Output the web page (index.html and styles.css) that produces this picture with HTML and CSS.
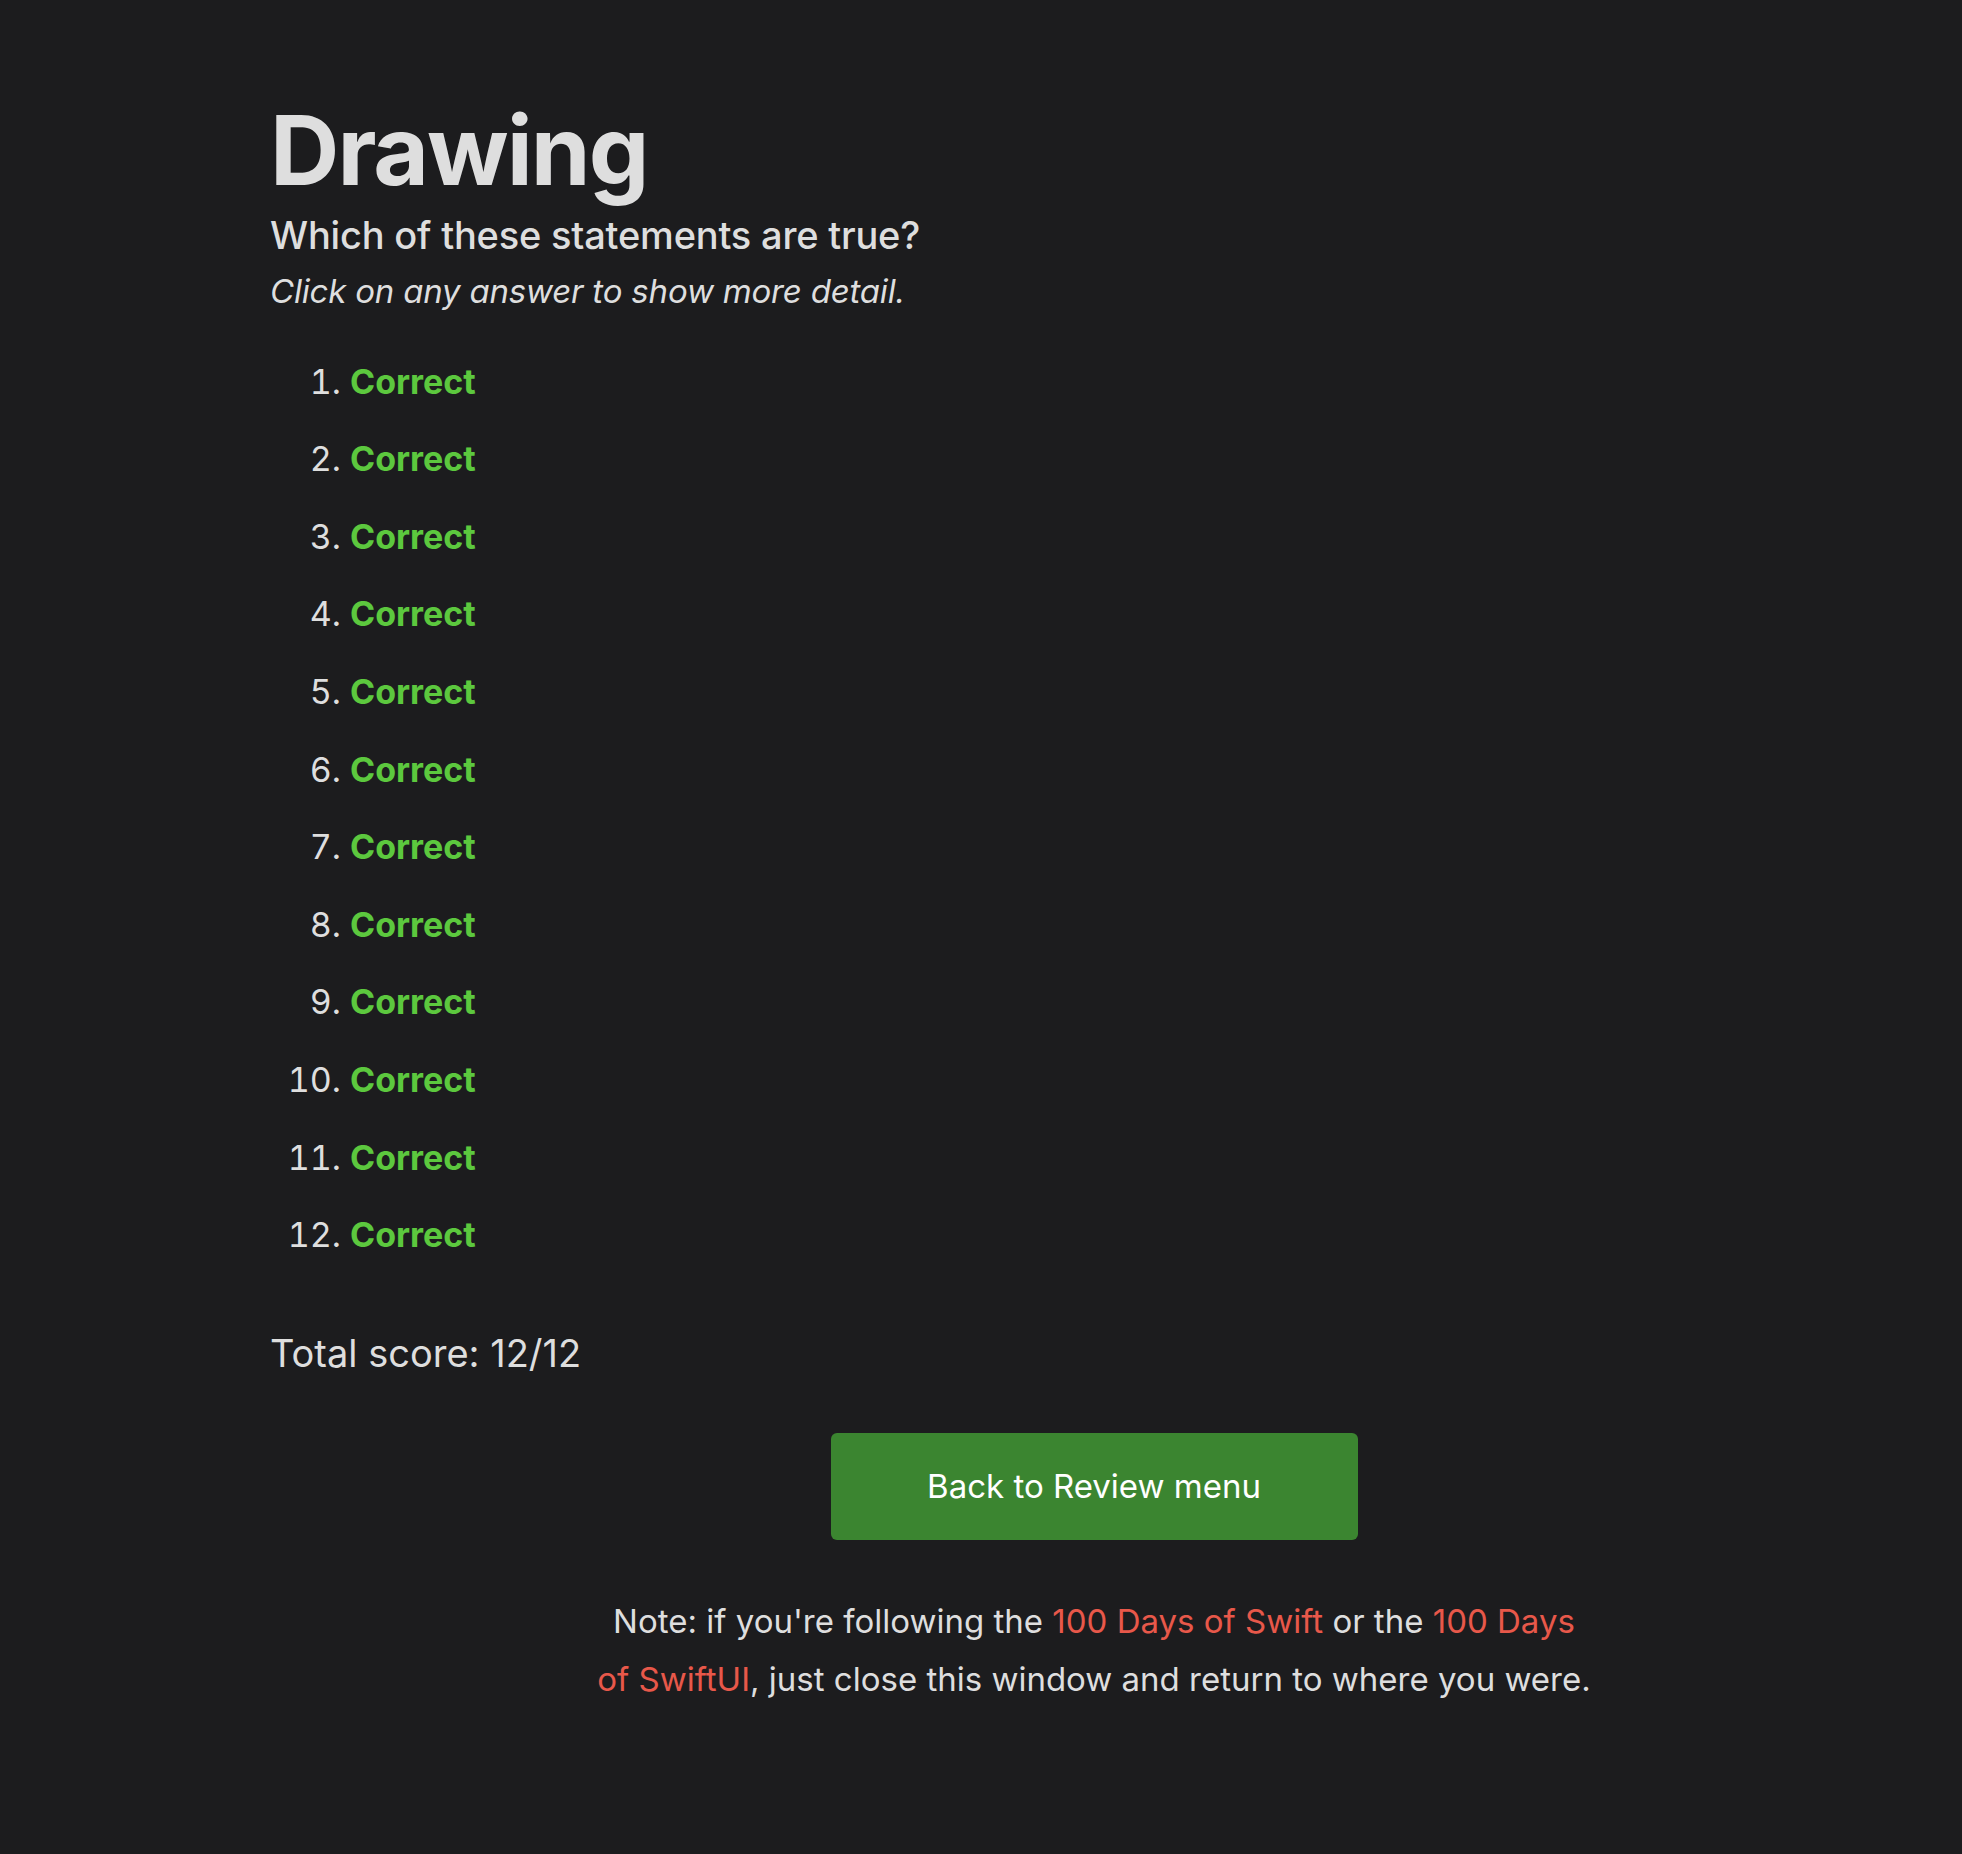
FILE: index.html
```html
<!DOCTYPE html>
<html lang="en">
<head>
<meta charset="utf-8">
<title>Drawing</title>
<link rel="stylesheet" href="styles.css">
</head>
<body>
<main class="page">
  <h1 class="title">Drawing</h1>
  <p class="subtitle">Which of these statements are true?</p>
  <p class="hint">Click on any answer to show more detail.</p>
  <ol class="answers">
    <li><span class="correct">Correct</span></li>
    <li><span class="correct">Correct</span></li>
    <li><span class="correct">Correct</span></li>
    <li><span class="correct">Correct</span></li>
    <li><span class="correct">Correct</span></li>
    <li><span class="correct">Correct</span></li>
    <li><span class="correct">Correct</span></li>
    <li><span class="correct">Correct</span></li>
    <li><span class="correct">Correct</span></li>
    <li><span class="correct">Correct</span></li>
    <li><span class="correct">Correct</span></li>
    <li><span class="correct">Correct</span></li>
  </ol>
  <p class="score">Total score: 12/12</p>
  <div class="actions">
    <a class="button" href="#">Back to Review menu</a>
  </div>
  <p class="note">Note: if you're following the <a href="#">100 Days of Swift</a> or the <a href="#">100 Days of SwiftUI</a>, just close this window and return to where you were.</p>
</main>
</body>
</html>
```

FILE: styles.css
```css
html, body {
  margin: 0;
  padding: 0;
  background: #1c1c1e;
}

body {
  font-family: Inter, "Noto Sans", "Liberation Sans", sans-serif;
  color: #dedede;
  min-height: 1854px;
}

.page {
  padding: 102px 44px 0 270px;
}

.title {
  margin: 0;
  font-size: 96px;
  line-height: 96px;
  font-weight: 700;
  letter-spacing: -0.02em;
  color: #dedede;
}

.subtitle {
  margin: 15px 0 0;
  font-size: 38px;
  line-height: 44px;
  font-weight: 500;
  letter-spacing: -0.2px;
}

.hint {
  margin: 12px 0 0;
  font-size: 33px;
  line-height: 44px;
  font-style: italic;
  letter-spacing: -0.2px;
}

.answers {
  margin: 46.6px 0 0;
  padding: 0 0 0 80px;
  font-size: 34px;
  line-height: 44px;
}

.answers li + li {
  margin-top: 33.6px;
}

.correct {
  color: #5cc83e;
  font-weight: 700;
}

.score {
  margin: 71.6px 0 0;
  font-size: 38px;
  line-height: 48px;
}

.actions {
  margin-top: 56px;
  display: flex;
  justify-content: center;
}

.button {
  display: flex;
  align-items: center;
  justify-content: center;
  width: 527px;
  height: 107px;
  background: #3b8530;
  border-radius: 6px;
  color: #ffffff;
  font-size: 33px;
  text-decoration: none;
}

.note {
  margin: 52px auto 0;
  max-width: 1000px;
  text-align: center;
  font-size: 33px;
  line-height: 58px;
}

.note a {
  color: #e8584a;
  text-decoration: none;
}
```
